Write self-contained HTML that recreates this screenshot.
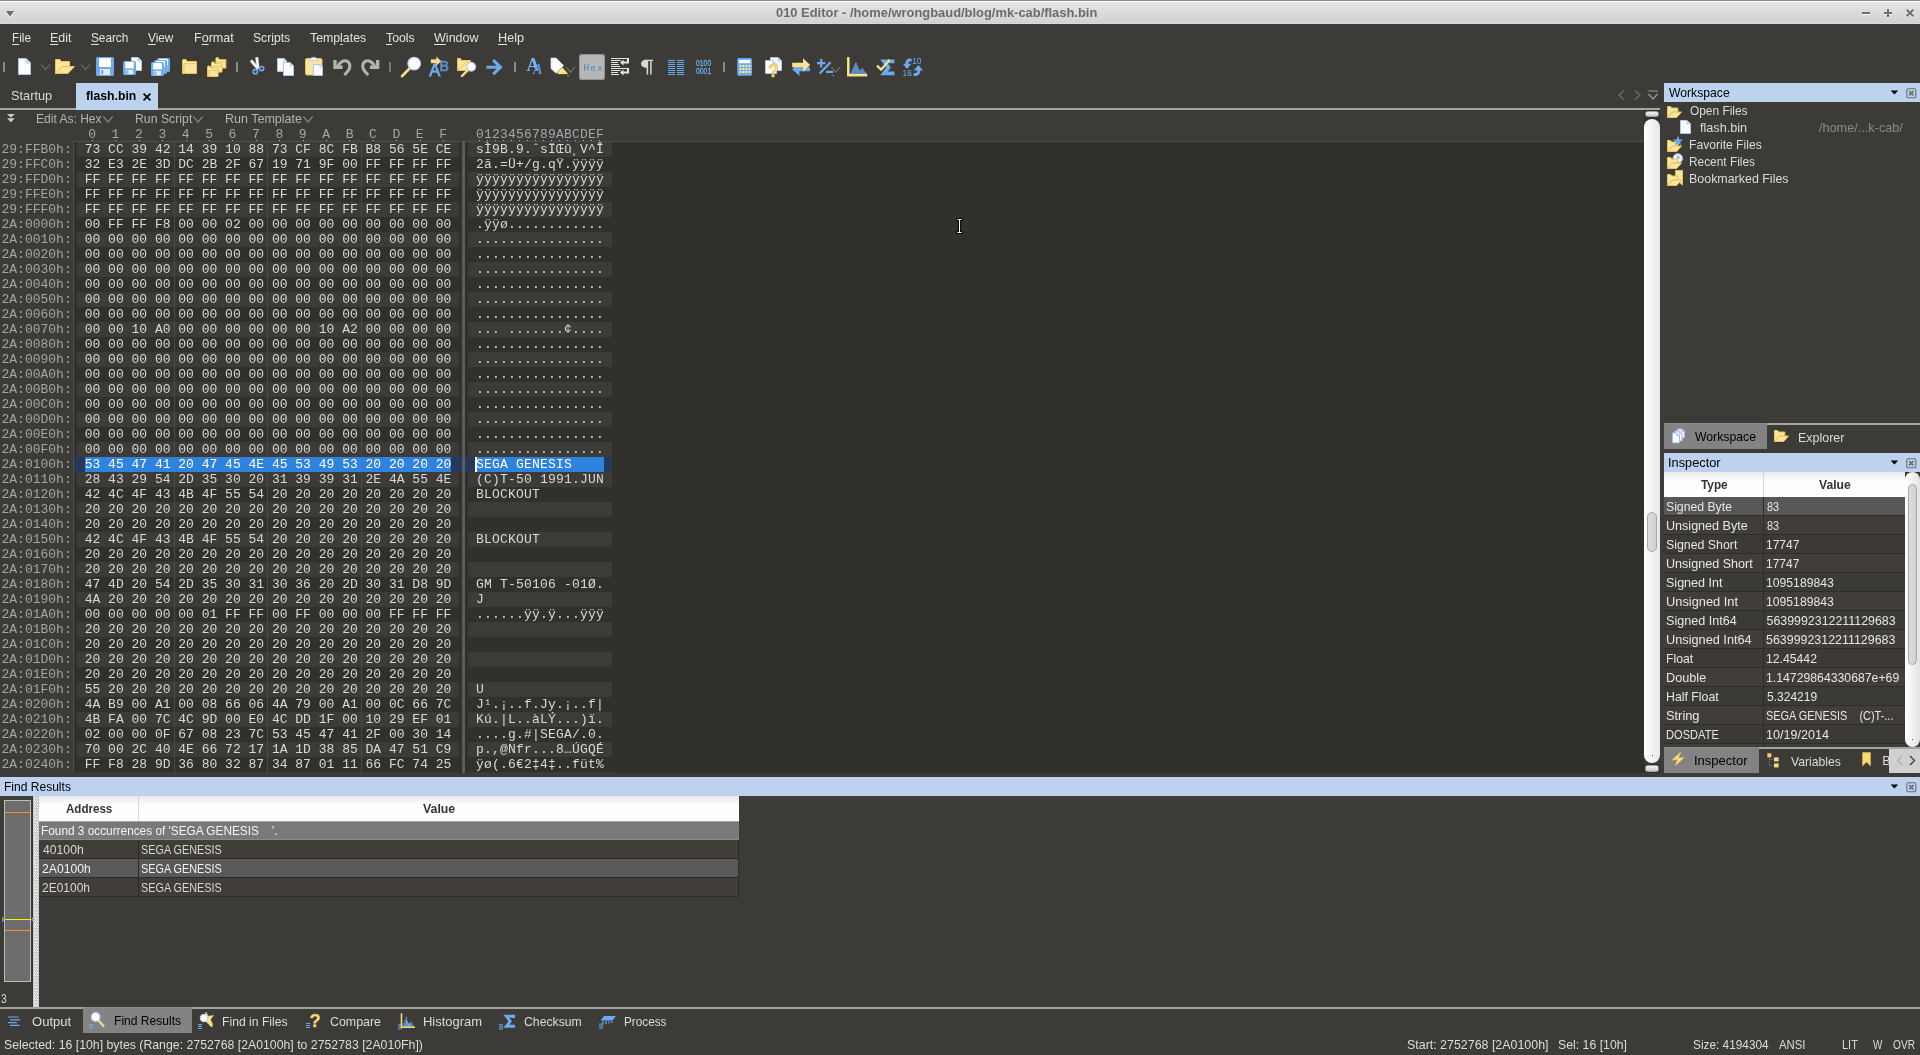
<!DOCTYPE html><html><head><meta charset="utf-8"><title>010 Editor - /home/wrongbaud/blog/mk-cab/flash.bin</title>
<style>
*{box-sizing:border-box}
html,body{margin:0;padding:0;background:#3c3b37;}
body{width:1920px;height:1055px;overflow:hidden;position:relative;font-family:"Liberation Sans",sans-serif;font-size:12.4px;color:#dcdcdc;}
#app{position:absolute;left:0;top:0;width:1920px;height:1055px;overflow:hidden;will-change:transform;}
.t{position:absolute;white-space:pre;transform-origin:0 0;}
.b{font-weight:bold}
.m{font-family:"Liberation Mono",monospace;font-size:13px;}
.k{color:#000}
.dim{color:#8a8a8a}
svg{position:absolute;overflow:visible}
u{text-decoration:underline;text-underline-offset:2px;text-decoration-thickness:1px}
</style></head><body><div id="app">
<div style="position:absolute;left:0;top:0;width:1920px;height:24px;background:linear-gradient(#8c8c8c 0,#8c8c8c 1px,#ffffff 1px,#ffffff 2px,#e5e5e5 2px,#d2d2d2 23px,#dadada 23px,#dadada 24px)"></div>
<svg style="left:5px;top:10px" width="10" height="9"><path d="M0.5 2L9.5 2L5 8Z" fill="#f6f6f6"/><path d="M0.9 1L9.1 1L5 6.8Z" fill="#707070"/></svg>
<span id="t1" class="t b" style="left:776.32px;top:5.4px;line-height:16px;transform:scaleX(1.0418);font-size:12.4px;color:#6b6b6b">010 Editor - /home/wrongbaud/blog/mk-cab/flash.bin</span>
<svg style="left:1860px;top:6px" width="58" height="14" viewBox="1860 6 58 14"><g fill="none" stroke-width="2"><g stroke="#f4f4f4" transform="translate(0,1)"><path d="M1862 13H1870"/><path d="M1884 13H1892M1888 9V17"/><path d="M1906.7 9.7L1913.3 16.3M1913.3 9.7L1906.7 16.3"/></g><g stroke="#707070"><path d="M1862 13H1870"/><path d="M1884 13H1892M1888 9V17"/><path d="M1906.7 9.7L1913.3 16.3M1913.3 9.7L1906.7 16.3"/></g></g></svg>
<span id="t2" class="t " style="left:12.10px;top:29.5px;line-height:16px;transform:scaleX(0.9464);color:#e2e2e2"><u>F</u>ile</span>
<span id="t3" class="t " style="left:49.96px;top:29.5px;line-height:16px;transform:scaleX(1.0023);color:#e2e2e2"><u>E</u>dit</span>
<span id="t4" class="t " style="left:91.08px;top:29.5px;line-height:16px;transform:scaleX(0.9492);color:#e2e2e2"><u>S</u>earch</span>
<span id="t5" class="t " style="left:147.92px;top:29.5px;line-height:16px;transform:scaleX(0.9527);color:#e2e2e2"><u>V</u>iew</span>
<span id="t6" class="t " style="left:193.72px;top:29.5px;line-height:16px;transform:scaleX(1.0136);color:#e2e2e2">F<u>o</u>rmat</span>
<span id="t7" class="t " style="left:253.24px;top:29.5px;line-height:16px;transform:scaleX(0.9811);color:#e2e2e2">Scr<u>i</u>pts</span>
<span id="t8" class="t " style="left:310.09px;top:29.5px;line-height:16px;transform:scaleX(0.9936);color:#e2e2e2">Temp<u>l</u>ates</span>
<span id="t9" class="t " style="left:386.32px;top:29.5px;line-height:16px;transform:scaleX(0.9898);color:#e2e2e2"><u>T</u>ools</span>
<span id="t10" class="t " style="left:434.05px;top:29.5px;line-height:16px;transform:scaleX(1.0123);color:#e2e2e2"><u>W</u>indow</span>
<span id="t11" class="t " style="left:498.18px;top:29.5px;line-height:16px;transform:scaleX(1.0219);color:#e2e2e2"><u>H</u>elp</span>
<svg style="left:0px;top:50px" width="960" height="34" viewBox="0 50 960 34"><rect x="3" y="62" width="2" height="10" fill="#8a8a8a"/>
<path d="M18.5 58.5H26L30.5 63V74.5H18.5Z" fill="#fbfcff" stroke="#b5c5ea"/><path d="M26 58.5V63H30.5" fill="#e3eafa" stroke="#b5c5ea" stroke-linejoin="round"/>
<path d="M41 64.5L45.5 69.5L50 64.5" stroke="#757575" stroke-width="1.1" fill="none"/>
<path d="M55.5 73.5V59.5H60.0L61.0 61.5H69.5V66.5H62.5Z" fill="#f8e59e" stroke="#e8c255" stroke-linejoin="round"/><path d="M55.5 73.5L62.5 66.5H74.5L68.0 73.5Z" fill="#f8e59e" stroke="#e8c255" stroke-linejoin="round"/>
<path d="M81 64.5L85.5 69.5L90 64.5" stroke="#757575" stroke-width="1.1" fill="none"/>
<rect x="96" y="57" width="18" height="19" rx="1.6" fill="#6cabee"/><rect x="99.0" y="58.2" width="12.0" height="8.8" fill="#ffffff"/><rect x="100.0" y="69.0" width="10.0" height="6.0" fill="#ebebeb"/><rect x="101.2" y="70.0" width="2.2" height="4.4" fill="#6cabee"/>
<path d="M131.5 57.5H138L141.5 61V70.5H131.5Z" fill="#fbfcff" stroke="#b5c5ea"/><path d="M138 57.5V61H141.5" fill="#e3eafa" stroke="#b5c5ea" stroke-linejoin="round"/><rect x="123" y="61" width="13" height="14" rx="1.6" fill="#6cabee"/><rect x="125.16666666666667" y="61.88421052631579" width="8.666666666666668" height="6.484210526315789" fill="#ffffff"/><rect x="125.88888888888889" y="69.84210526315789" width="7.222222222222222" height="4.421052631578947" fill="#ebebeb"/><rect x="126.75555555555556" y="70.57894736842105" width="1.588888888888889" height="3.2421052631578946" fill="#6cabee"/>
<rect x="157" y="58" width="13" height="14" rx="1.6" fill="#6cabee"/><rect x="159.16666666666666" y="58.88421052631579" width="8.666666666666668" height="6.484210526315789" fill="#ffffff"/><rect x="159.88888888888889" y="66.84210526315789" width="7.222222222222222" height="4.421052631578947" fill="#ebebeb"/><rect x="160.75555555555556" y="67.57894736842105" width="1.588888888888889" height="3.2421052631578946" fill="#6cabee"/><rect x="154" y="60" width="13" height="14" rx="1.6" fill="#6cabee"/><rect x="156.16666666666666" y="60.88421052631579" width="8.666666666666668" height="6.484210526315789" fill="#ffffff"/><rect x="156.88888888888889" y="68.84210526315789" width="7.222222222222222" height="4.421052631578947" fill="#ebebeb"/><rect x="157.75555555555556" y="69.57894736842105" width="1.588888888888889" height="3.2421052631578946" fill="#6cabee"/><rect x="151" y="62" width="13" height="14" rx="1.6" fill="#6cabee"/><rect x="153.16666666666666" y="62.88421052631579" width="8.666666666666668" height="6.484210526315789" fill="#ffffff"/><rect x="153.88888888888889" y="70.84210526315789" width="7.222222222222222" height="4.421052631578947" fill="#ebebeb"/><rect x="154.75555555555556" y="71.57894736842105" width="1.588888888888889" height="3.2421052631578946" fill="#6cabee"/>
<path d="M182.5 73.5V60L183 59.5H186.05L186.95 61.5H196.5V73.5Z" fill="#f8e59e" stroke="#e8c255"/><path d="M184 73V63.6H196" fill="none" stroke="#e8c255" stroke-width=".9"/><path d="M183.2 62.4H195.8" stroke="#fdf3c8" stroke-width=".8"/>
<path d="M215.9 68.10000000000001V58.2L216.4 57.7H218.37L219.03 59.7H225.9V68.10000000000001Z" fill="#f8e59e" stroke="#e8c255"/><path d="M217.4 67.60000000000001V61.800000000000004H225.4" fill="none" stroke="#e8c255" stroke-width=".9"/><path d="M216.6 60.6H225.20000000000002" stroke="#fdf3c8" stroke-width=".8"/><path d="M211.5 72.1V62.4L212 61.9H214.105L214.795 63.9H222.0V72.1Z" fill="#f8e59e" stroke="#e8c255"/><path d="M213 71.6V66.0H221.5" fill="none" stroke="#e8c255" stroke-width=".9"/><path d="M212.2 64.8H221.3" stroke="#fdf3c8" stroke-width=".8"/><path d="M207.5 76.5V66.6L208 66.1H210.132L210.828 68.1H218.1V76.5Z" fill="#f8e59e" stroke="#e8c255"/><path d="M209 76.0V70.19999999999999H217.6" fill="none" stroke="#e8c255" stroke-width=".9"/><path d="M208.2 69.0H217.4" stroke="#fdf3c8" stroke-width=".8"/>
<rect x="236" y="62" width="2" height="10" fill="#8a8a8a"/>
<path d="M250 61.2L252.4 59.8L259 68.2L257 69.6Z" fill="#f6f8fe" stroke="#dfe6f7" stroke-width=".5"/><path d="M255.6 57.6L258 57.2L259.2 68L256.8 68.8Z" fill="#f6f8fe" stroke="#dfe6f7" stroke-width=".5"/><path d="M257.6 68.6L256.2 70M258.4 68.4L260 68.4" stroke="#aab4c8" stroke-width="1.2"/><circle cx="255.3" cy="71.8" r="2.2" fill="#4a4a46" stroke="#6cabee" stroke-width="1.5"/><circle cx="261.6" cy="68.6" r="2.2" fill="#4a4a46" stroke="#6cabee" stroke-width="1.5"/>
<path d="M277.5 58.5H284L286.5 61V71.5H277.5Z" fill="#fbfcff" stroke="#b5c5ea"/><path d="M284 58.5V61H286.5" fill="#e3eafa" stroke="#b5c5ea" stroke-linejoin="round"/><path d="M283.5 62.5H290L293.5 66V75.5H283.5Z" fill="#fbfcff" stroke="#b5c5ea"/><path d="M290 62.5V66H293.5" fill="#e3eafa" stroke="#b5c5ea" stroke-linejoin="round"/>
<rect x="305.5" y="58.5" width="16.5" height="16.5" rx="1.5" fill="#f8e59e" stroke="#e8c255"/><path d="M309.5 60.5V58.6H311.2L311.8 57.4H315.8L316.4 58.6H318V60.5Z" fill="#f4f6fc" stroke="#b5c5ea" stroke-width=".8"/><path d="M313.5 64.5H320L322.5 67V75.5H313.5Z" fill="#fbfcff" stroke="#b5c5ea"/><path d="M320 64.5V67H322.5" fill="#e3eafa" stroke="#b5c5ea" stroke-linejoin="round"/>
<g transform="translate(0,0)"><path d="M333.3 60H336.6V65.6H342.6V69H333.3Z" fill="#b2b2b2"/><path d="M338 66.4C339.6 61.8 344 59.8 347 61.2C350.4 62.8 350.8 67.6 348 71L344.4 75" fill="none" stroke="#b2b2b2" stroke-width="3.1" stroke-linejoin="round"/></g>
<g transform="translate(379.6,0) scale(-1,1) translate(-333,0)"><path d="M333.3 60H336.6V65.6H342.6V69H333.3Z" fill="#b2b2b2"/><path d="M338 66.4C339.6 61.8 344 59.8 347 61.2C350.4 62.8 350.8 67.6 348 71L344.4 75" fill="none" stroke="#b2b2b2" stroke-width="3.1" stroke-linejoin="round"/></g>
<rect x="389" y="62" width="2" height="10" fill="#777"/>
<path d="M409.8 68.1L402 76.2" stroke="#f8e08e" stroke-width="2.6" stroke-linecap="round"/><path d="M409.8 68.1L402 76.2" stroke="#e9c45c" stroke-width=".5" transform="translate(.9,.9)"/><circle cx="414.2" cy="63.6" r="6.3" fill="#fdfdff" stroke="#c3d0ee" stroke-width="1.2"/>
<text x="429.2" y="76" font-family="Liberation Sans" font-size="16.6" fill="#6cabee" stroke="#6cabee" stroke-width=".8">A</text><text x="439.6" y="70.6" font-family="Liberation Sans" font-size="15.5" fill="#5a8fd0" stroke="#5a8fd0" stroke-width=".7" textLength="9.4" lengthAdjust="spacingAndGlyphs">B</text><path d="M431 59.4H436.4V56.8L441 61.2L436.4 65.6V63H431Z" fill="#f8e08e" stroke="#ecc862" stroke-width=".4"/>
<path d="M457.5 70.5V58.5H460.5L461.5 60.5H470.5V70.5Z" fill="#f8e59e" stroke="#e8c255"/><path d="M458 70L466 62.5H470" fill="none" stroke="#e8c255" stroke-width=".8"/><path d="M468.1 69.8L461.8 76" stroke="#f8e08e" stroke-width="2.2" stroke-linecap="round"/><path d="M468.1 69.8L461.8 76" stroke="#e9c45c" stroke-width=".5" transform="translate(.9,.9)"/><circle cx="471.2" cy="66.8" r="4.3" fill="#fdfdff" stroke="#c3d0ee" stroke-width="1.2"/>
<path d="M486.4 67.2H499.5M493.2 60.2L500.4 67.2L493.2 74.2" fill="none" stroke="#6cabee" stroke-width="3.1"/>
<rect x="514" y="62" width="2" height="10" fill="#8a8a8a"/>
<text x="526.4" y="71.4" font-family="Liberation Serif" font-weight="bold" font-size="18" fill="#78b8f6">A</text><text x="533" y="74" style="font-style:italic;font-weight:bold" font-family="Liberation Serif" font-size="14.6" fill="#5590d0">A</text>
<path d="M551 58H556.2L563.6 65.6L556 73.2L551 68.6Z" fill="#fbfcff" stroke="#e4e9f6" stroke-width=".6"/><path d="M562.4 67.6L568 73.9H558L557.4 72.6Z" fill="#f9e592" stroke="#e8c255" stroke-width=".4"/><path d="M566 67L570.5 72.4L575 67" stroke="#777" stroke-width="1.1" fill="none"/><path d="M566.5 75.2H570L568.2 77Z" fill="#777"/>
<rect x="611" y="58" width="15.5" height="1" fill="#e4e4e4"/><rect x="611" y="60" width="9.5" height="1" fill="#e4e4e4"/><rect x="611" y="62" width="7" height="1" fill="#e4e4e4"/><rect x="611" y="64" width="8" height="1" fill="#e4e4e4"/><rect x="611" y="66" width="9" height="1" fill="#e4e4e4"/><rect x="611" y="68" width="15.5" height="1" fill="#e4e4e4"/><rect x="611" y="70" width="9.5" height="1" fill="#e4e4e4"/><rect x="611" y="72" width="7" height="1" fill="#e4e4e4"/><rect x="611" y="74" width="8" height="1" fill="#e4e4e4"/><path d="M626 58H629V63.5H623.5V65.6L620 62.6L623.5 59.6V61.5H627V59H626Z" fill="#e4e4e4"/><path d="M626 68H629V73.5H623.5V75.6L620 72.6L623.5 69.6V71.5H627V69H626Z" fill="#e4e4e4"/>
<path d="M645 60.4H653.2" stroke="#d8d8d8" stroke-width="1.3"/><path d="M647.4 60V74.4M650.9 60V74.4" stroke="#d8d8d8" stroke-width="1.5" fill="none"/><path d="M647 59.8H645.6A4.6 3.95 0 0 0 645.6 67.7H647Z" fill="#d8d8d8"/>
<path d="M668 60.40H675.2M677 60.40H684.2" stroke="#6cabee" stroke-width="1"/><path d="M668 62.42H675.2M677 62.42H684.2" stroke="#6cabee" stroke-width="1"/><path d="M668 64.44H675.2M677 64.44H684.2" stroke="#6cabee" stroke-width="1"/><path d="M668 66.46H675.2M677 66.46H684.2" stroke="#6cabee" stroke-width="1"/><path d="M668 68.48H675.2M677 68.48H684.2" stroke="#6cabee" stroke-width="1"/><path d="M668 70.50H675.2M677 70.50H684.2" stroke="#6cabee" stroke-width="1"/><path d="M668 72.52H675.2M677 72.52H684.2" stroke="#6cabee" stroke-width="1"/><path d="M668 74.54H675.2M677 74.54H684.2" stroke="#6cabee" stroke-width="1"/>
<text x="696" y="66" font-family="Liberation Sans" font-size="8.6" fill="#6cabee" stroke="#6cabee" stroke-width=".3" textLength="15.2" lengthAdjust="spacingAndGlyphs">0100</text><text x="696" y="74.2" font-family="Liberation Sans" font-size="8.6" fill="#6cabee" stroke="#6cabee" stroke-width=".3" textLength="15.2" lengthAdjust="spacingAndGlyphs">0001</text>
<rect x="723" y="62" width="2" height="10" fill="#8a8a8a"/>
<rect x="737.2" y="58" width="14.8" height="17.8" rx="1.8" fill="#6cabee"/><rect x="739" y="60" width="11.2" height="3.2" fill="#fff"/><rect x="739.4" y="65" width="2" height="2" fill="#f9e88f"/><rect x="742.4" y="65" width="2" height="2" fill="#f9e88f"/><rect x="745.4" y="65" width="2" height="2" fill="#f9e88f"/><rect x="748.4" y="65" width="2" height="2" fill="#f9e88f"/><rect x="739.4" y="68" width="2" height="2" fill="#f9e88f"/><rect x="742.4" y="68" width="2" height="2" fill="#f9e88f"/><rect x="745.4" y="68" width="2" height="2" fill="#f9e88f"/><rect x="748.4" y="68" width="2" height="2" fill="#f9e88f"/><rect x="739.4" y="71" width="2" height="2" fill="#f9e88f"/><rect x="742.4" y="71" width="2" height="2" fill="#f9e88f"/><rect x="745.4" y="71" width="2" height="2" fill="#f9e88f"/><rect x="748.4" y="71" width="2" height="2" fill="#f9e88f"/>
<path d="M770.5 57.5H778L781.5 61V70.5H770.5Z" fill="#fbfcff" stroke="#b5c5ea"/><path d="M778 57.5V61H781.5" fill="#e3eafa" stroke="#b5c5ea" stroke-linejoin="round"/><path d="M765.5 60.5H773L776.5 64V73.5H765.5Z" fill="#fbfcff" stroke="#b5c5ea"/><path d="M773 60.5V64H776.5" fill="#e3eafa" stroke="#b5c5ea" stroke-linejoin="round"/><text x="768" y="76.8" font-family="Liberation Sans" font-weight="bold" font-size="18" fill="#f8df88" stroke="#dcb047" stroke-width=".5">?</text>
<path d="M810 67.2H799.4V62.4L792.2 69.2L799.4 76V71.2H810Z" fill="#6cabee"/><path d="M792.2 62.8H803V58.2L810.2 65L803 71.8V67.2H792.2Z" fill="#f9e296"/>
<path d="M817 63.2H825.4M821.2 59V67.4M819.6 73.4L830.6 62.2M826 71.8H833" stroke="#6cabee" stroke-width="2.2" fill="none"/><path d="M831.4 67.2L835.6999999999999 72.0L840.0 67.2" stroke="#777" stroke-width="1.1" fill="none"/><path d="M831.6 75H834.8L833.2 76.6Z" fill="#777"/>
<path d="M850.5 74V73" stroke="#6cabee" stroke-width=".72"/><path d="M851.5 74V71.6" stroke="#6cabee" stroke-width=".72"/><path d="M852.5 74V69.4" stroke="#6cabee" stroke-width=".72"/><path d="M853.5 74V67" stroke="#6cabee" stroke-width=".72"/><path d="M854.5 74V64.6" stroke="#6cabee" stroke-width=".72"/><path d="M855.5 74V62.6" stroke="#6cabee" stroke-width=".72"/><path d="M856.5 74V63" stroke="#6cabee" stroke-width=".72"/><path d="M857.5 74V65.4" stroke="#6cabee" stroke-width=".72"/><path d="M858.5 74V67.6" stroke="#6cabee" stroke-width=".72"/><path d="M859.5 74V69.6" stroke="#6cabee" stroke-width=".72"/><path d="M860.5 74V70" stroke="#6cabee" stroke-width=".72"/><path d="M861.5 74V68.6" stroke="#6cabee" stroke-width=".72"/><path d="M862.5 74V68" stroke="#6cabee" stroke-width=".72"/><path d="M863.5 74V69.4" stroke="#6cabee" stroke-width=".72"/><path d="M864.5 74V70.8" stroke="#6cabee" stroke-width=".72"/><path d="M865.5 74V72" stroke="#6cabee" stroke-width=".72"/><path d="M866.5 74V73" stroke="#6cabee" stroke-width=".72"/><path d="M848.2 57V75.2H867.2" fill="none" stroke="#f7d877" stroke-width="2.4"/><path d="M848.8 57.5V74.6H867" fill="none" stroke="#fdf0b8" stroke-width=".7"/>
<path d="M892.6 63.2V61.4H884L888.6 67.4L884 73.4H892.6V71.4" fill="none" stroke="#6cabee" stroke-width="3.7"/><path d="M877 65.6L881.2 69.6L889.8 59.8" fill="none" stroke="#f8de86" stroke-width="2.3"/>
<path d="M911.6 60H909A3.3 3.3 0 0 0 907 64.4" fill="none" stroke="#6cabee" stroke-width="3"/><path d="M902.8 63.8H911.4L907 69Z" fill="#6cabee"/><path d="M913.6 74.6H916A3.3 3.3 0 0 0 918.4 70" fill="none" stroke="#6cabee" stroke-width="3"/><path d="M913.6 70.4H923L918.4 65Z" fill="#6cabee"/><text x="912.2" y="64.2" font-family="Liberation Sans" font-size="8.4" fill="#6cabee">10</text><text x="902.6" y="76.4" font-family="Liberation Sans" font-size="8.4" fill="#6cabee">16</text></svg>
<div style="position:absolute;left:579px;top:54px;width:26px;height:26px;border-radius:3.5px;background:#b7b7b7;box-shadow:inset 0 0 0 1px #939393, inset 0 0 2px 1px #a8a8a8"></div>
<span class="t" style="left:583.6px;top:61px;line-height:14px;font-family:'DejaVu Sans Mono',monospace;font-size:9.3px;letter-spacing:1.05px;color:#4a86c8">Hex</span>
<span id="t12" class="t " style="left:10.60px;top:87.6px;line-height:16px;transform:scaleX(1.0292);color:#d8d8d8">Startup</span>
<div style="position:absolute;left:76px;top:83px;width:82px;height:27px;background:#bcd2ee;"></div>
<span id="t13" class="t b k" style="left:85.59px;top:87.6px;line-height:16px;transform:scaleX(0.9884);">flash.bin</span>
<svg style="left:142px;top:92px" width="10" height="10"><path d="M1.6 1.6L8.4 8.4M8.4 1.6L1.6 8.4" stroke="#000" stroke-width="1.7" fill="none"/></svg>
<div style="position:absolute;left:0px;top:108px;width:76px;height:2px;background:#a5a5a5;"></div>
<div style="position:absolute;left:158px;top:108px;width:1502px;height:2px;background:#a5a5a5;"></div>
<svg style="left:1616px;top:88.2px" width="44" height="14"><g stroke="#6f6f6f" stroke-width="1.2" fill="none"><path d="M8 2.5L3 7L8 11.5"/><path d="M19 2.5L24 7L19 11.5"/><path d="M32 3H42M32.5 6L37 11L41.5 6" stroke="#9a9a9a"/></g></svg>
<svg style="left:6.6px;top:114.2px" width="9" height="11"><g fill="#cdcdcd"><path d="M0 0H7.8L3.9 3.8Z"/><path d="M0 4.2H7.8L3.9 8.2Z"/></g></svg>
<span id="t14" class="t " style="left:35.98px;top:110.8px;line-height:16px;transform:scaleX(0.9714);color:#b4b4b4">Edit As: Hex</span>
<svg style="left:102.9px;top:115.6px" width="10" height="8"><path d="M0.4 0.6L5 6.2L9.6 0.6" stroke="#8e8e8e" stroke-width="1.1" fill="none"/></svg>
<span id="t15" class="t " style="left:134.52px;top:110.8px;line-height:16px;transform:scaleX(0.9907);color:#b4b4b4">Run Script</span>
<svg style="left:193.0px;top:115.6px" width="10" height="8"><path d="M0.4 0.6L5 6.2L9.6 0.6" stroke="#8e8e8e" stroke-width="1.1" fill="none"/></svg>
<span id="t16" class="t " style="left:224.75px;top:110.8px;line-height:16px;transform:scaleX(1.0099);color:#b4b4b4">Run Template</span>
<svg style="left:302.9px;top:115.6px" width="10" height="8"><path d="M0.4 0.6L5 6.2L9.6 0.6" stroke="#8e8e8e" stroke-width="1.1" fill="none"/></svg>
<div style="position:absolute;left:74px;top:142px;width:1570px;height:631px;background:#32302d;"></div>
<div class="t m" style="left:88.2px;top:127px;line-height:15px;color:#a6a6a6;word-spacing:0">0  1  2  3  4  5  6  7  8  9  A  B  C  D  E  F</div>
<div class="t m" style="left:476px;top:127px;line-height:15px;color:#a6a6a6;letter-spacing:0.2px">0123456789ABCDEF</div>
<i style="position:absolute;left:92px;top:140px;width:1px;height:1px;background:#b0b0b0"></i><i style="position:absolute;left:115px;top:140px;width:1px;height:1px;background:#b0b0b0"></i><i style="position:absolute;left:139px;top:140px;width:1px;height:1px;background:#b0b0b0"></i><i style="position:absolute;left:162px;top:140px;width:1px;height:1px;background:#b0b0b0"></i><i style="position:absolute;left:186px;top:140px;width:1px;height:1px;background:#b0b0b0"></i><i style="position:absolute;left:209px;top:140px;width:1px;height:1px;background:#b0b0b0"></i><i style="position:absolute;left:232px;top:140px;width:1px;height:1px;background:#b0b0b0"></i><i style="position:absolute;left:256px;top:140px;width:1px;height:1px;background:#b0b0b0"></i><i style="position:absolute;left:279px;top:140px;width:1px;height:1px;background:#b0b0b0"></i><i style="position:absolute;left:303px;top:140px;width:1px;height:1px;background:#b0b0b0"></i><i style="position:absolute;left:326px;top:140px;width:1px;height:1px;background:#b0b0b0"></i><i style="position:absolute;left:349px;top:140px;width:1px;height:1px;background:#b0b0b0"></i><i style="position:absolute;left:373px;top:140px;width:1px;height:1px;background:#b0b0b0"></i><i style="position:absolute;left:396px;top:140px;width:1px;height:1px;background:#b0b0b0"></i><i style="position:absolute;left:420px;top:140px;width:1px;height:1px;background:#b0b0b0"></i><i style="position:absolute;left:443px;top:140px;width:1px;height:1px;background:#b0b0b0"></i><i style="position:absolute;left:479px;top:140px;width:1px;height:1px;background:#b0b0b0"></i><i style="position:absolute;left:487px;top:140px;width:1px;height:1px;background:#b0b0b0"></i><i style="position:absolute;left:495px;top:140px;width:1px;height:1px;background:#b0b0b0"></i><i style="position:absolute;left:503px;top:140px;width:1px;height:1px;background:#b0b0b0"></i><i style="position:absolute;left:511px;top:140px;width:1px;height:1px;background:#b0b0b0"></i><i style="position:absolute;left:519px;top:140px;width:1px;height:1px;background:#b0b0b0"></i><i style="position:absolute;left:527px;top:140px;width:1px;height:1px;background:#b0b0b0"></i><i style="position:absolute;left:535px;top:140px;width:1px;height:1px;background:#b0b0b0"></i><i style="position:absolute;left:543px;top:140px;width:1px;height:1px;background:#b0b0b0"></i><i style="position:absolute;left:551px;top:140px;width:1px;height:1px;background:#b0b0b0"></i><i style="position:absolute;left:559px;top:140px;width:1px;height:1px;background:#b0b0b0"></i><i style="position:absolute;left:567px;top:140px;width:1px;height:1px;background:#b0b0b0"></i><i style="position:absolute;left:575px;top:140px;width:1px;height:1px;background:#b0b0b0"></i><i style="position:absolute;left:583px;top:140px;width:1px;height:1px;background:#b0b0b0"></i><i style="position:absolute;left:591px;top:140px;width:1px;height:1px;background:#b0b0b0"></i><i style="position:absolute;left:599px;top:140px;width:1px;height:1px;background:#b0b0b0"></i>
<div style="position:absolute;left:73px;top:141px;width:1571px;height:1px;background:#4b4d4f;"></div>
<div style="position:absolute;left:73px;top:141px;width:1px;height:632px;background:#4b4d4f;"></div>
<div style="position:absolute;left:77px;top:142px;width:382px;height:15px;background:#3c3b37;"></div>
<div style="position:absolute;left:468px;top:142px;width:144px;height:15px;background:#3c3b37;"></div>
<div style="position:absolute;left:77px;top:172px;width:382px;height:15px;background:#3c3b37;"></div>
<div style="position:absolute;left:468px;top:172px;width:144px;height:15px;background:#3c3b37;"></div>
<div style="position:absolute;left:77px;top:202px;width:382px;height:15px;background:#3c3b37;"></div>
<div style="position:absolute;left:468px;top:202px;width:144px;height:15px;background:#3c3b37;"></div>
<div style="position:absolute;left:77px;top:232px;width:382px;height:15px;background:#3c3b37;"></div>
<div style="position:absolute;left:468px;top:232px;width:144px;height:15px;background:#3c3b37;"></div>
<div style="position:absolute;left:77px;top:262px;width:382px;height:15px;background:#3c3b37;"></div>
<div style="position:absolute;left:468px;top:262px;width:144px;height:15px;background:#3c3b37;"></div>
<div style="position:absolute;left:77px;top:292px;width:382px;height:15px;background:#3c3b37;"></div>
<div style="position:absolute;left:468px;top:292px;width:144px;height:15px;background:#3c3b37;"></div>
<div style="position:absolute;left:77px;top:322px;width:382px;height:15px;background:#3c3b37;"></div>
<div style="position:absolute;left:468px;top:322px;width:144px;height:15px;background:#3c3b37;"></div>
<div style="position:absolute;left:77px;top:352px;width:382px;height:15px;background:#3c3b37;"></div>
<div style="position:absolute;left:468px;top:352px;width:144px;height:15px;background:#3c3b37;"></div>
<div style="position:absolute;left:77px;top:382px;width:382px;height:15px;background:#3c3b37;"></div>
<div style="position:absolute;left:468px;top:382px;width:144px;height:15px;background:#3c3b37;"></div>
<div style="position:absolute;left:77px;top:412px;width:382px;height:15px;background:#3c3b37;"></div>
<div style="position:absolute;left:468px;top:412px;width:144px;height:15px;background:#3c3b37;"></div>
<div style="position:absolute;left:77px;top:442px;width:382px;height:15px;background:#3c3b37;"></div>
<div style="position:absolute;left:468px;top:442px;width:144px;height:15px;background:#3c3b37;"></div>
<div style="position:absolute;left:74px;top:457px;width:538px;height:15px;background:#27395b;"></div>
<div style="position:absolute;left:85px;top:457px;width:366px;height:15px;background:#2d83de;"></div>
<div style="position:absolute;left:477px;top:457px;width:127px;height:15px;background:#2d83de;"></div>
<div style="position:absolute;left:77px;top:472px;width:382px;height:15px;background:#3c3b37;"></div>
<div style="position:absolute;left:468px;top:472px;width:144px;height:15px;background:#3c3b37;"></div>
<div style="position:absolute;left:77px;top:502px;width:382px;height:15px;background:#3c3b37;"></div>
<div style="position:absolute;left:468px;top:502px;width:144px;height:15px;background:#3c3b37;"></div>
<div style="position:absolute;left:77px;top:532px;width:382px;height:15px;background:#3c3b37;"></div>
<div style="position:absolute;left:468px;top:532px;width:144px;height:15px;background:#3c3b37;"></div>
<div style="position:absolute;left:77px;top:562px;width:382px;height:15px;background:#3c3b37;"></div>
<div style="position:absolute;left:468px;top:562px;width:144px;height:15px;background:#3c3b37;"></div>
<div style="position:absolute;left:77px;top:592px;width:382px;height:15px;background:#3c3b37;"></div>
<div style="position:absolute;left:468px;top:592px;width:144px;height:15px;background:#3c3b37;"></div>
<div style="position:absolute;left:77px;top:622px;width:382px;height:15px;background:#3c3b37;"></div>
<div style="position:absolute;left:468px;top:622px;width:144px;height:15px;background:#3c3b37;"></div>
<div style="position:absolute;left:77px;top:652px;width:382px;height:15px;background:#3c3b37;"></div>
<div style="position:absolute;left:468px;top:652px;width:144px;height:15px;background:#3c3b37;"></div>
<div style="position:absolute;left:77px;top:682px;width:382px;height:15px;background:#3c3b37;"></div>
<div style="position:absolute;left:468px;top:682px;width:144px;height:15px;background:#3c3b37;"></div>
<div style="position:absolute;left:77px;top:712px;width:382px;height:15px;background:#3c3b37;"></div>
<div style="position:absolute;left:468px;top:712px;width:144px;height:15px;background:#3c3b37;"></div>
<div style="position:absolute;left:77px;top:742px;width:382px;height:15px;background:#3c3b37;"></div>
<div style="position:absolute;left:468px;top:742px;width:144px;height:15px;background:#3c3b37;"></div>
<div style="position:absolute;left:77px;top:772px;width:382px;height:1px;background:#3c3b37;"></div>
<div style="position:absolute;left:468px;top:772px;width:144px;height:1px;background:#3c3b37;"></div>
<div style="position:absolute;left:174px;top:142px;width:1px;height:631px;background:#4a4a48;"></div>
<div style="position:absolute;left:267px;top:142px;width:1px;height:631px;background:#4a4a48;"></div>
<div style="position:absolute;left:361px;top:142px;width:1px;height:631px;background:#4a4a48;"></div>
<div style="position:absolute;left:85px;top:457px;width:366px;height:15px;background:#2d83de;"></div>
<div style="position:absolute;left:462px;top:142px;width:3px;height:631px;background:#5c5c5c;"></div>
<div style="position:absolute;left:475px;top:457px;width:2px;height:15px;background:#ffffff;"></div>
<div class="t m" style="left:1.5px;top:142px;line-height:15px;color:#a4a4a4">29:FFB0h:</div>
<div class="t m" style="left:84.7px;top:142px;line-height:15px;color:#d8d8d8">73 CC 39 42 14 39 10 88 73 CF 8C FB B8 56 5E CE</div>
<div class="t m" style="left:476px;top:142px;line-height:15px;color:#d8d8d8;letter-spacing:0.2px">sÌ9B.9.ˆsÏŒû¸V^Î</div>
<div class="t m" style="left:1.5px;top:157px;line-height:15px;color:#a4a4a4">29:FFC0h:</div>
<div class="t m" style="left:84.7px;top:157px;line-height:15px;color:#d8d8d8">32 E3 2E 3D DC 2B 2F 67 19 71 9F 00 FF FF FF FF</div>
<div class="t m" style="left:476px;top:157px;line-height:15px;color:#d8d8d8;letter-spacing:0.2px">2ã.=Ü+/g.qŸ.ÿÿÿÿ</div>
<div class="t m" style="left:1.5px;top:172px;line-height:15px;color:#a4a4a4">29:FFD0h:</div>
<div class="t m" style="left:84.7px;top:172px;line-height:15px;color:#d8d8d8">FF FF FF FF FF FF FF FF FF FF FF FF FF FF FF FF</div>
<div class="t m" style="left:476px;top:172px;line-height:15px;color:#d8d8d8;letter-spacing:0.2px">ÿÿÿÿÿÿÿÿÿÿÿÿÿÿÿÿ</div>
<div class="t m" style="left:1.5px;top:187px;line-height:15px;color:#a4a4a4">29:FFE0h:</div>
<div class="t m" style="left:84.7px;top:187px;line-height:15px;color:#d8d8d8">FF FF FF FF FF FF FF FF FF FF FF FF FF FF FF FF</div>
<div class="t m" style="left:476px;top:187px;line-height:15px;color:#d8d8d8;letter-spacing:0.2px">ÿÿÿÿÿÿÿÿÿÿÿÿÿÿÿÿ</div>
<div class="t m" style="left:1.5px;top:202px;line-height:15px;color:#a4a4a4">29:FFF0h:</div>
<div class="t m" style="left:84.7px;top:202px;line-height:15px;color:#d8d8d8">FF FF FF FF FF FF FF FF FF FF FF FF FF FF FF FF</div>
<div class="t m" style="left:476px;top:202px;line-height:15px;color:#d8d8d8;letter-spacing:0.2px">ÿÿÿÿÿÿÿÿÿÿÿÿÿÿÿÿ</div>
<div class="t m" style="left:1.5px;top:217px;line-height:15px;color:#a4a4a4">2A:0000h:</div>
<div class="t m" style="left:84.7px;top:217px;line-height:15px;color:#d8d8d8">00 FF FF F8 00 00 02 00 00 00 00 00 00 00 00 00</div>
<div class="t m" style="left:476px;top:217px;line-height:15px;color:#d8d8d8;letter-spacing:0.2px">.ÿÿø............</div>
<div class="t m" style="left:1.5px;top:232px;line-height:15px;color:#a4a4a4">2A:0010h:</div>
<div class="t m" style="left:84.7px;top:232px;line-height:15px;color:#d8d8d8">00 00 00 00 00 00 00 00 00 00 00 00 00 00 00 00</div>
<div class="t m" style="left:476px;top:232px;line-height:15px;color:#d8d8d8;letter-spacing:0.2px">................</div>
<div class="t m" style="left:1.5px;top:247px;line-height:15px;color:#a4a4a4">2A:0020h:</div>
<div class="t m" style="left:84.7px;top:247px;line-height:15px;color:#d8d8d8">00 00 00 00 00 00 00 00 00 00 00 00 00 00 00 00</div>
<div class="t m" style="left:476px;top:247px;line-height:15px;color:#d8d8d8;letter-spacing:0.2px">................</div>
<div class="t m" style="left:1.5px;top:262px;line-height:15px;color:#a4a4a4">2A:0030h:</div>
<div class="t m" style="left:84.7px;top:262px;line-height:15px;color:#d8d8d8">00 00 00 00 00 00 00 00 00 00 00 00 00 00 00 00</div>
<div class="t m" style="left:476px;top:262px;line-height:15px;color:#d8d8d8;letter-spacing:0.2px">................</div>
<div class="t m" style="left:1.5px;top:277px;line-height:15px;color:#a4a4a4">2A:0040h:</div>
<div class="t m" style="left:84.7px;top:277px;line-height:15px;color:#d8d8d8">00 00 00 00 00 00 00 00 00 00 00 00 00 00 00 00</div>
<div class="t m" style="left:476px;top:277px;line-height:15px;color:#d8d8d8;letter-spacing:0.2px">................</div>
<div class="t m" style="left:1.5px;top:292px;line-height:15px;color:#a4a4a4">2A:0050h:</div>
<div class="t m" style="left:84.7px;top:292px;line-height:15px;color:#d8d8d8">00 00 00 00 00 00 00 00 00 00 00 00 00 00 00 00</div>
<div class="t m" style="left:476px;top:292px;line-height:15px;color:#d8d8d8;letter-spacing:0.2px">................</div>
<div class="t m" style="left:1.5px;top:307px;line-height:15px;color:#a4a4a4">2A:0060h:</div>
<div class="t m" style="left:84.7px;top:307px;line-height:15px;color:#d8d8d8">00 00 00 00 00 00 00 00 00 00 00 00 00 00 00 00</div>
<div class="t m" style="left:476px;top:307px;line-height:15px;color:#d8d8d8;letter-spacing:0.2px">................</div>
<div class="t m" style="left:1.5px;top:322px;line-height:15px;color:#a4a4a4">2A:0070h:</div>
<div class="t m" style="left:84.7px;top:322px;line-height:15px;color:#d8d8d8">00 00 10 A0 00 00 00 00 00 00 10 A2 00 00 00 00</div>
<div class="t m" style="left:476px;top:322px;line-height:15px;color:#d8d8d8;letter-spacing:0.2px">... .......¢....</div>
<div class="t m" style="left:1.5px;top:337px;line-height:15px;color:#a4a4a4">2A:0080h:</div>
<div class="t m" style="left:84.7px;top:337px;line-height:15px;color:#d8d8d8">00 00 00 00 00 00 00 00 00 00 00 00 00 00 00 00</div>
<div class="t m" style="left:476px;top:337px;line-height:15px;color:#d8d8d8;letter-spacing:0.2px">................</div>
<div class="t m" style="left:1.5px;top:352px;line-height:15px;color:#a4a4a4">2A:0090h:</div>
<div class="t m" style="left:84.7px;top:352px;line-height:15px;color:#d8d8d8">00 00 00 00 00 00 00 00 00 00 00 00 00 00 00 00</div>
<div class="t m" style="left:476px;top:352px;line-height:15px;color:#d8d8d8;letter-spacing:0.2px">................</div>
<div class="t m" style="left:1.5px;top:367px;line-height:15px;color:#a4a4a4">2A:00A0h:</div>
<div class="t m" style="left:84.7px;top:367px;line-height:15px;color:#d8d8d8">00 00 00 00 00 00 00 00 00 00 00 00 00 00 00 00</div>
<div class="t m" style="left:476px;top:367px;line-height:15px;color:#d8d8d8;letter-spacing:0.2px">................</div>
<div class="t m" style="left:1.5px;top:382px;line-height:15px;color:#a4a4a4">2A:00B0h:</div>
<div class="t m" style="left:84.7px;top:382px;line-height:15px;color:#d8d8d8">00 00 00 00 00 00 00 00 00 00 00 00 00 00 00 00</div>
<div class="t m" style="left:476px;top:382px;line-height:15px;color:#d8d8d8;letter-spacing:0.2px">................</div>
<div class="t m" style="left:1.5px;top:397px;line-height:15px;color:#a4a4a4">2A:00C0h:</div>
<div class="t m" style="left:84.7px;top:397px;line-height:15px;color:#d8d8d8">00 00 00 00 00 00 00 00 00 00 00 00 00 00 00 00</div>
<div class="t m" style="left:476px;top:397px;line-height:15px;color:#d8d8d8;letter-spacing:0.2px">................</div>
<div class="t m" style="left:1.5px;top:412px;line-height:15px;color:#a4a4a4">2A:00D0h:</div>
<div class="t m" style="left:84.7px;top:412px;line-height:15px;color:#d8d8d8">00 00 00 00 00 00 00 00 00 00 00 00 00 00 00 00</div>
<div class="t m" style="left:476px;top:412px;line-height:15px;color:#d8d8d8;letter-spacing:0.2px">................</div>
<div class="t m" style="left:1.5px;top:427px;line-height:15px;color:#a4a4a4">2A:00E0h:</div>
<div class="t m" style="left:84.7px;top:427px;line-height:15px;color:#d8d8d8">00 00 00 00 00 00 00 00 00 00 00 00 00 00 00 00</div>
<div class="t m" style="left:476px;top:427px;line-height:15px;color:#d8d8d8;letter-spacing:0.2px">................</div>
<div class="t m" style="left:1.5px;top:442px;line-height:15px;color:#a4a4a4">2A:00F0h:</div>
<div class="t m" style="left:84.7px;top:442px;line-height:15px;color:#d8d8d8">00 00 00 00 00 00 00 00 00 00 00 00 00 00 00 00</div>
<div class="t m" style="left:476px;top:442px;line-height:15px;color:#d8d8d8;letter-spacing:0.2px">................</div>
<div class="t m" style="left:1.5px;top:457px;line-height:15px;color:#a4a4a4">2A:0100h:</div>
<div class="t m" style="left:84.7px;top:457px;line-height:15px;color:#ffffff">53 45 47 41 20 47 45 4E 45 53 49 53 20 20 20 20</div>
<div class="t m" style="left:476px;top:457px;line-height:15px;color:#ffffff;letter-spacing:0.2px">SEGA GENESIS    </div>
<div class="t m" style="left:1.5px;top:472px;line-height:15px;color:#a4a4a4">2A:0110h:</div>
<div class="t m" style="left:84.7px;top:472px;line-height:15px;color:#d8d8d8">28 43 29 54 2D 35 30 20 31 39 39 31 2E 4A 55 4E</div>
<div class="t m" style="left:476px;top:472px;line-height:15px;color:#d8d8d8;letter-spacing:0.2px">(C)T-50 1991.JUN</div>
<div class="t m" style="left:1.5px;top:487px;line-height:15px;color:#a4a4a4">2A:0120h:</div>
<div class="t m" style="left:84.7px;top:487px;line-height:15px;color:#d8d8d8">42 4C 4F 43 4B 4F 55 54 20 20 20 20 20 20 20 20</div>
<div class="t m" style="left:476px;top:487px;line-height:15px;color:#d8d8d8;letter-spacing:0.2px">BLOCKOUT        </div>
<div class="t m" style="left:1.5px;top:502px;line-height:15px;color:#a4a4a4">2A:0130h:</div>
<div class="t m" style="left:84.7px;top:502px;line-height:15px;color:#d8d8d8">20 20 20 20 20 20 20 20 20 20 20 20 20 20 20 20</div>
<div class="t m" style="left:476px;top:502px;line-height:15px;color:#d8d8d8;letter-spacing:0.2px">                </div>
<div class="t m" style="left:1.5px;top:517px;line-height:15px;color:#a4a4a4">2A:0140h:</div>
<div class="t m" style="left:84.7px;top:517px;line-height:15px;color:#d8d8d8">20 20 20 20 20 20 20 20 20 20 20 20 20 20 20 20</div>
<div class="t m" style="left:476px;top:517px;line-height:15px;color:#d8d8d8;letter-spacing:0.2px">                </div>
<div class="t m" style="left:1.5px;top:532px;line-height:15px;color:#a4a4a4">2A:0150h:</div>
<div class="t m" style="left:84.7px;top:532px;line-height:15px;color:#d8d8d8">42 4C 4F 43 4B 4F 55 54 20 20 20 20 20 20 20 20</div>
<div class="t m" style="left:476px;top:532px;line-height:15px;color:#d8d8d8;letter-spacing:0.2px">BLOCKOUT        </div>
<div class="t m" style="left:1.5px;top:547px;line-height:15px;color:#a4a4a4">2A:0160h:</div>
<div class="t m" style="left:84.7px;top:547px;line-height:15px;color:#d8d8d8">20 20 20 20 20 20 20 20 20 20 20 20 20 20 20 20</div>
<div class="t m" style="left:476px;top:547px;line-height:15px;color:#d8d8d8;letter-spacing:0.2px">                </div>
<div class="t m" style="left:1.5px;top:562px;line-height:15px;color:#a4a4a4">2A:0170h:</div>
<div class="t m" style="left:84.7px;top:562px;line-height:15px;color:#d8d8d8">20 20 20 20 20 20 20 20 20 20 20 20 20 20 20 20</div>
<div class="t m" style="left:476px;top:562px;line-height:15px;color:#d8d8d8;letter-spacing:0.2px">                </div>
<div class="t m" style="left:1.5px;top:577px;line-height:15px;color:#a4a4a4">2A:0180h:</div>
<div class="t m" style="left:84.7px;top:577px;line-height:15px;color:#d8d8d8">47 4D 20 54 2D 35 30 31 30 36 20 2D 30 31 D8 9D</div>
<div class="t m" style="left:476px;top:577px;line-height:15px;color:#d8d8d8;letter-spacing:0.2px">GM T-50106 -01Ø.</div>
<div class="t m" style="left:1.5px;top:592px;line-height:15px;color:#a4a4a4">2A:0190h:</div>
<div class="t m" style="left:84.7px;top:592px;line-height:15px;color:#d8d8d8">4A 20 20 20 20 20 20 20 20 20 20 20 20 20 20 20</div>
<div class="t m" style="left:476px;top:592px;line-height:15px;color:#d8d8d8;letter-spacing:0.2px">J               </div>
<div class="t m" style="left:1.5px;top:607px;line-height:15px;color:#a4a4a4">2A:01A0h:</div>
<div class="t m" style="left:84.7px;top:607px;line-height:15px;color:#d8d8d8">00 00 00 00 00 01 FF FF 00 FF 00 00 00 FF FF FF</div>
<div class="t m" style="left:476px;top:607px;line-height:15px;color:#d8d8d8;letter-spacing:0.2px">......ÿÿ.ÿ...ÿÿÿ</div>
<div class="t m" style="left:1.5px;top:622px;line-height:15px;color:#a4a4a4">2A:01B0h:</div>
<div class="t m" style="left:84.7px;top:622px;line-height:15px;color:#d8d8d8">20 20 20 20 20 20 20 20 20 20 20 20 20 20 20 20</div>
<div class="t m" style="left:476px;top:622px;line-height:15px;color:#d8d8d8;letter-spacing:0.2px">                </div>
<div class="t m" style="left:1.5px;top:637px;line-height:15px;color:#a4a4a4">2A:01C0h:</div>
<div class="t m" style="left:84.7px;top:637px;line-height:15px;color:#d8d8d8">20 20 20 20 20 20 20 20 20 20 20 20 20 20 20 20</div>
<div class="t m" style="left:476px;top:637px;line-height:15px;color:#d8d8d8;letter-spacing:0.2px">                </div>
<div class="t m" style="left:1.5px;top:652px;line-height:15px;color:#a4a4a4">2A:01D0h:</div>
<div class="t m" style="left:84.7px;top:652px;line-height:15px;color:#d8d8d8">20 20 20 20 20 20 20 20 20 20 20 20 20 20 20 20</div>
<div class="t m" style="left:476px;top:652px;line-height:15px;color:#d8d8d8;letter-spacing:0.2px">                </div>
<div class="t m" style="left:1.5px;top:667px;line-height:15px;color:#a4a4a4">2A:01E0h:</div>
<div class="t m" style="left:84.7px;top:667px;line-height:15px;color:#d8d8d8">20 20 20 20 20 20 20 20 20 20 20 20 20 20 20 20</div>
<div class="t m" style="left:476px;top:667px;line-height:15px;color:#d8d8d8;letter-spacing:0.2px">                </div>
<div class="t m" style="left:1.5px;top:682px;line-height:15px;color:#a4a4a4">2A:01F0h:</div>
<div class="t m" style="left:84.7px;top:682px;line-height:15px;color:#d8d8d8">55 20 20 20 20 20 20 20 20 20 20 20 20 20 20 20</div>
<div class="t m" style="left:476px;top:682px;line-height:15px;color:#d8d8d8;letter-spacing:0.2px">U               </div>
<div class="t m" style="left:1.5px;top:697px;line-height:15px;color:#a4a4a4">2A:0200h:</div>
<div class="t m" style="left:84.7px;top:697px;line-height:15px;color:#d8d8d8">4A B9 00 A1 00 08 66 06 4A 79 00 A1 00 0C 66 7C</div>
<div class="t m" style="left:476px;top:697px;line-height:15px;color:#d8d8d8;letter-spacing:0.2px">J¹.¡..f.Jy.¡..f|</div>
<div class="t m" style="left:1.5px;top:712px;line-height:15px;color:#a4a4a4">2A:0210h:</div>
<div class="t m" style="left:84.7px;top:712px;line-height:15px;color:#d8d8d8">4B FA 00 7C 4C 9D 00 E0 4C DD 1F 00 10 29 EF 01</div>
<div class="t m" style="left:476px;top:712px;line-height:15px;color:#d8d8d8;letter-spacing:0.2px">Kú.|L..àLÝ...)ï.</div>
<div class="t m" style="left:1.5px;top:727px;line-height:15px;color:#a4a4a4">2A:0220h:</div>
<div class="t m" style="left:84.7px;top:727px;line-height:15px;color:#d8d8d8">02 00 00 0F 67 08 23 7C 53 45 47 41 2F 00 30 14</div>
<div class="t m" style="left:476px;top:727px;line-height:15px;color:#d8d8d8;letter-spacing:0.2px">....g.#|SEGA/.0.</div>
<div class="t m" style="left:1.5px;top:742px;line-height:15px;color:#a4a4a4">2A:0230h:</div>
<div class="t m" style="left:84.7px;top:742px;line-height:15px;color:#d8d8d8">70 00 2C 40 4E 66 72 17 1A 1D 38 85 DA 47 51 C9</div>
<div class="t m" style="left:476px;top:742px;line-height:15px;color:#d8d8d8;letter-spacing:0.2px">p.,@Nfr...8…ÚGQÉ</div>
<div class="t m" style="left:1.5px;top:757px;line-height:15px;color:#a4a4a4">2A:0240h:</div>
<div class="t m" style="left:84.7px;top:757px;line-height:15px;color:#d8d8d8">FF F8 28 9D 36 80 32 87 34 87 01 11 66 FC 74 25</div>
<div class="t m" style="left:476px;top:757px;line-height:15px;color:#d8d8d8;letter-spacing:0.2px">ÿø(.6€2‡4‡..füt%</div>
<div style="position:absolute;left:1644px;top:110px;width:16px;height:32px;background:#33312e;"></div>
<div style="position:absolute;left:1644px;top:764px;width:16px;height:9px;background:#33312e;"></div>
<div style="position:absolute;left:1645px;top:111px;width:14px;height:6px;border-radius:2.5px;background:linear-gradient(#f4f4f4,#c8c8c8);border:1px solid #a0a0a0"></div>
<div style="position:absolute;left:1644px;top:119px;width:16px;height:644px;border-radius:8px;background:linear-gradient(90deg,#ffffff,#f6f6f6 40%,#e6e6e6)"></div>
<div style="position:absolute;left:1647px;top:512px;width:10px;height:40px;border-radius:5px;background:linear-gradient(90deg,#dedede,#d0d0d0);border:1px solid #a8a8a8"></div>
<div style="position:absolute;left:1645px;top:765px;width:14px;height:7px;border-radius:2.5px;background:linear-gradient(#f4f4f4,#c8c8c8);border:1px solid #a0a0a0"></div>
<div style="position:absolute;left:1652px;top:755px;width:1px;height:1px;background:#444;"></div>
<div style="position:absolute;left:1664px;top:83px;width:256px;height:19px;background:#bcd2ee;"></div>
<span id="t17" class="t k" style="left:1668.91px;top:84.7px;line-height:16px;transform:scaleX(0.9827);">Workspace</span>
<svg style="left:1888px;top:88px" width="30" height="12"><path d="M2.6 2.4H10.2L6.4 6.6Z" fill="#000"/><rect x="18.8" y="0.8" width="9" height="9" rx="1.4" fill="none" stroke="#6e6e6e" stroke-width="1.1"/><path d="M21.2 3.2L25.4 7.4M25.4 3.2L21.2 7.4" stroke="#6e6e6e" stroke-width="1.7"/></svg>
<svg style="left:1664px;top:102px" width="40" height="90" viewBox="1664 102 40 90"><path d="M1667.5 117.5V106.5H1670.75L1671.5 108.0H1677.875V112.0H1672.625Z" fill="#f8e59e" stroke="#e8c255" stroke-linejoin="round"/><path d="M1667.5 117.5L1672.625 112.0H1681.5L1676.75 117.5Z" fill="#f8e59e" stroke="#e8c255" stroke-linejoin="round"/>
<path d="M1680.5 120.5H1687L1690.5 124V133.5H1680.5Z" fill="#fbfcff" stroke="#b5c5ea"/><path d="M1687 120.5V124H1690.5" fill="#e3eafa" stroke="#b5c5ea" stroke-linejoin="round"/>
<path d="M1667.5 151.5V140.5H1670.75L1671.5 142.0H1677.875V146.0H1672.625Z" fill="#f8e59e" stroke="#e8c255" stroke-linejoin="round"/><path d="M1667.5 151.5L1672.625 146.0H1681.5L1676.75 151.5Z" fill="#f8e59e" stroke="#e8c255" stroke-linejoin="round"/><path d="M1678 135.8L1679.4 139.4L1683.2 139.6L1680.2 142L1681.2 145.6L1678 143.6L1674.8 145.6L1675.8 142L1672.8 139.6L1676.6 139.4Z" fill="#6cabee"/>
<circle cx="1677.8" cy="158.4" r="4.7" fill="#eef2fb" stroke="#b4c6e6" stroke-width="1"/><path d="M1677.8 155.4V158.6L1680 157" stroke="#6f8fc0" stroke-width=".9" fill="none"/><path opacity="1" d="M1667.5 168.5V157.5H1670.75L1671.5 159.0H1677.875V163.0H1672.625Z" fill="#f8e59e" stroke="#e8c255" stroke-linejoin="round"/><path d="M1667.5 168.5L1672.625 163.0H1681.5L1676.75 168.5Z" fill="#f8e59e" stroke="#e8c255" stroke-linejoin="round"/>
<path d="M1675.5 170.5H1682.5V185L1679 182L1675.5 185Z" fill="#f8e59e" stroke="#e8c255"/><path d="M1667.5 185.5V174.5H1670.75L1671.5 176.0H1677.875V180.0H1672.625Z" fill="#f8e59e" stroke="#e8c255" stroke-linejoin="round"/><path d="M1667.5 185.5L1672.625 180.0H1681.5L1676.75 185.5Z" fill="#f8e59e" stroke="#e8c255" stroke-linejoin="round"/></svg>
<span id="t18" class="t " style="left:1689.71px;top:102.8px;line-height:16px;transform:scaleX(0.9600);">Open Files</span>
<span id="t19" class="t " style="left:1699.68px;top:119.8px;line-height:16px;transform:scaleX(1.0206);">flash.bin</span>
<span id="t20" class="t dim" style="left:1818.74px;top:119.8px;line-height:16px;transform:scaleX(1.0232);">/home/...k-cab/</span>
<span id="t21" class="t " style="left:1688.71px;top:136.8px;line-height:16px;transform:scaleX(0.9776);">Favorite Files</span>
<span id="t22" class="t " style="left:1688.66px;top:153.8px;line-height:16px;transform:scaleX(0.9579);">Recent Files</span>
<span id="t23" class="t " style="left:1689.20px;top:170.8px;line-height:16px;transform:scaleX(1.0037);">Bookmarked Files</span>
<div style="position:absolute;left:1664px;top:423px;width:256px;height:2px;background:#a4a4a4;"></div>
<div style="position:absolute;left:1664px;top:423px;width:103px;height:26px;background:#838383;"></div>
<div style="position:absolute;left:1664px;top:423px;width:103px;height:1px;background:#8c8c8c;"></div>
<span id="t24" class="t k" style="left:1695.35px;top:428.5px;line-height:16px;transform:scaleX(0.9870);">Workspace</span>
<span id="t25" class="t " style="left:1797.67px;top:430.4px;line-height:16px;transform:scaleX(1.0072);">Explorer</span>
<div style="position:absolute;left:1664px;top:453px;width:256px;height:19px;background:#bcd2ee;"></div>
<span id="t26" class="t k" style="left:1668.15px;top:454.7px;line-height:16px;transform:scaleX(1.0320);">Inspector</span>
<svg style="left:1888px;top:458px" width="30" height="12"><path d="M2.6 2.4H10.2L6.4 6.6Z" fill="#000"/><rect x="18.8" y="0.8" width="9" height="9" rx="1.4" fill="none" stroke="#6e6e6e" stroke-width="1.1"/><path d="M21.2 3.2L25.4 7.4M25.4 3.2L21.2 7.4" stroke="#6e6e6e" stroke-width="1.7"/></svg>
<div style="position:absolute;left:1664px;top:472px;width:241px;height:25px;background:linear-gradient(#e8e8e8,#fdfdfd 35%,#ffffff)"></div>
<div style="position:absolute;left:1763px;top:472px;width:1px;height:25px;background:#d8d8d8;"></div>
<span id="t27" class="t b" style="left:1700.98px;top:476.7px;line-height:16px;transform:scaleX(0.9524);color:#333">Type</span>
<span id="t28" class="t b" style="left:1818.95px;top:476.7px;line-height:16px;transform:scaleX(0.9813);color:#333">Value</span>
<div style="position:absolute;left:1664px;top:497px;width:241px;height:251px;background:#2e2d2a;"></div>
<div style="position:absolute;left:1664px;top:497px;width:99px;height:18px;background:#575757;"></div>
<div style="position:absolute;left:1764px;top:497px;width:141px;height:18px;background:#575757;"></div>
<span id="t29" class="t " style="left:1666.48px;top:499.3px;line-height:16px;transform:scaleX(0.9867);color:#e6e6e6">Signed Byte</span>
<span id="t30" class="t " style="left:1766.76px;top:499.3px;line-height:16px;transform:scaleX(0.8809);color:#e6e6e6">83</span>
<div style="position:absolute;left:1664px;top:516px;width:99px;height:18px;background:#413e3a;"></div>
<div style="position:absolute;left:1764px;top:516px;width:141px;height:18px;background:#413e3a;"></div>
<span id="t31" class="t " style="left:1665.96px;top:518.3px;line-height:16px;transform:scaleX(1.0137);color:#e6e6e6">Unsigned Byte</span>
<span id="t32" class="t " style="left:1766.90px;top:518.3px;line-height:16px;transform:scaleX(0.8809);color:#e6e6e6">83</span>
<div style="position:absolute;left:1664px;top:535px;width:99px;height:18px;background:#3b3a36;"></div>
<div style="position:absolute;left:1764px;top:535px;width:141px;height:18px;background:#3b3a36;"></div>
<span id="t33" class="t " style="left:1665.97px;top:537.3px;line-height:16px;transform:scaleX(0.9953);color:#e6e6e6">Signed Short</span>
<span id="t34" class="t " style="left:1766.40px;top:537.3px;line-height:16px;transform:scaleX(0.9701);color:#e6e6e6">17747</span>
<div style="position:absolute;left:1664px;top:554px;width:99px;height:18px;background:#413e3a;"></div>
<div style="position:absolute;left:1764px;top:554px;width:141px;height:18px;background:#413e3a;"></div>
<span id="t35" class="t " style="left:1665.70px;top:556.3px;line-height:16px;transform:scaleX(1.0153);color:#e6e6e6">Unsigned Short</span>
<span id="t36" class="t " style="left:1765.91px;top:556.3px;line-height:16px;transform:scaleX(0.9701);color:#e6e6e6">17747</span>
<div style="position:absolute;left:1664px;top:573px;width:99px;height:18px;background:#3b3a36;"></div>
<div style="position:absolute;left:1764px;top:573px;width:141px;height:18px;background:#3b3a36;"></div>
<span id="t37" class="t " style="left:1666.20px;top:575.3px;line-height:16px;transform:scaleX(1.0111);color:#e6e6e6">Signed Int</span>
<span id="t38" class="t " style="left:1766.43px;top:575.3px;line-height:16px;transform:scaleX(0.9834);color:#e6e6e6">1095189843</span>
<div style="position:absolute;left:1664px;top:592px;width:99px;height:18px;background:#413e3a;"></div>
<div style="position:absolute;left:1764px;top:592px;width:141px;height:18px;background:#413e3a;"></div>
<span id="t39" class="t " style="left:1665.82px;top:594.3px;line-height:16px;transform:scaleX(1.0349);color:#e6e6e6">Unsigned Int</span>
<span id="t40" class="t " style="left:1766.41px;top:594.3px;line-height:16px;transform:scaleX(0.9840);color:#e6e6e6">1095189843</span>
<div style="position:absolute;left:1664px;top:611px;width:99px;height:18px;background:#3b3a36;"></div>
<div style="position:absolute;left:1764px;top:611px;width:141px;height:18px;background:#3b3a36;"></div>
<span id="t41" class="t " style="left:1665.86px;top:613.3px;line-height:16px;transform:scaleX(1.0149);color:#e6e6e6">Signed Int64</span>
<span id="t42" class="t " style="left:1766.52px;top:613.3px;line-height:16px;color:#e6e6e6">5639992312211129683</span>
<div style="position:absolute;left:1664px;top:630px;width:99px;height:18px;background:#413e3a;"></div>
<div style="position:absolute;left:1764px;top:630px;width:141px;height:18px;background:#413e3a;"></div>
<span id="t43" class="t " style="left:1665.65px;top:632.3px;line-height:16px;transform:scaleX(1.0280);color:#e6e6e6">Unsigned Int64</span>
<span id="t44" class="t " style="left:1766.11px;top:632.3px;line-height:16px;transform:scaleX(1.0023);color:#e6e6e6">5639992312211129683</span>
<div style="position:absolute;left:1664px;top:649px;width:99px;height:18px;background:#3b3a36;"></div>
<div style="position:absolute;left:1764px;top:649px;width:141px;height:18px;background:#3b3a36;"></div>
<span id="t45" class="t " style="left:1666.20px;top:651.3px;line-height:16px;transform:scaleX(0.9870);color:#e6e6e6">Float</span>
<span id="t46" class="t " style="left:1766.14px;top:651.3px;line-height:16px;transform:scaleX(0.9859);color:#e6e6e6">12.45442</span>
<div style="position:absolute;left:1664px;top:668px;width:99px;height:18px;background:#413e3a;"></div>
<div style="position:absolute;left:1764px;top:668px;width:141px;height:18px;background:#413e3a;"></div>
<span id="t47" class="t " style="left:1666.01px;top:670.3px;line-height:16px;transform:scaleX(1.0238);color:#e6e6e6">Double</span>
<span id="t48" class="t " style="left:1766.34px;top:670.3px;line-height:16px;transform:scaleX(0.9887);color:#e6e6e6">1.14729864330687e+69</span>
<div style="position:absolute;left:1664px;top:687px;width:99px;height:18px;background:#3b3a36;"></div>
<div style="position:absolute;left:1764px;top:687px;width:141px;height:18px;background:#3b3a36;"></div>
<span id="t49" class="t " style="left:1665.98px;top:689.3px;line-height:16px;transform:scaleX(0.9942);color:#e6e6e6">Half Float</span>
<span id="t50" class="t " style="left:1766.71px;top:689.3px;line-height:16px;transform:scaleX(0.9710);color:#e6e6e6">5.324219</span>
<div style="position:absolute;left:1664px;top:706px;width:99px;height:18px;background:#413e3a;"></div>
<div style="position:absolute;left:1764px;top:706px;width:141px;height:18px;background:#413e3a;"></div>
<span id="t51" class="t " style="left:1665.95px;top:708.3px;line-height:16px;transform:scaleX(1.0351);color:#e6e6e6">String</span>
<span id="t52" class="t " style="left:1765.67px;top:708.3px;line-height:16px;transform:scaleX(0.8813);color:#e6e6e6">SEGA GENESIS    (C)T-...</span>
<div style="position:absolute;left:1664px;top:725px;width:99px;height:18px;background:#3b3a36;"></div>
<div style="position:absolute;left:1764px;top:725px;width:141px;height:18px;background:#3b3a36;"></div>
<span id="t53" class="t " style="left:1665.88px;top:727.3px;line-height:16px;transform:scaleX(0.8955);color:#e6e6e6">DOSDATE</span>
<span id="t54" class="t " style="left:1765.89px;top:727.3px;line-height:16px;transform:scaleX(1.0169);color:#e6e6e6">10/19/2014</span>
<div style="position:absolute;left:1664px;top:744px;width:99px;height:4px;background:#403e3a;"></div>
<div style="position:absolute;left:1764px;top:744px;width:141px;height:4px;background:#403e3a;"></div>
<div style="position:absolute;left:1905px;top:472px;width:15px;height:276px;background:#3c3b37"></div>
<div style="position:absolute;left:1905px;top:472px;width:15px;height:275px;border-radius:7.5px;background:linear-gradient(90deg,#ffffff,#f4f4f4 40%,#e4e4e4)"></div>
<div style="position:absolute;left:1908px;top:484px;width:9px;height:181px;border-radius:4.5px;background:linear-gradient(90deg,#dedede,#d0d0d0);border:1px solid #a8a8a8"></div>
<div style="position:absolute;left:1912px;top:739px;width:1px;height:1px;background:#444;"></div>
<div style="position:absolute;left:1664px;top:747px;width:256px;height:2px;background:#a4a4a4;"></div>
<div style="position:absolute;left:1664px;top:747px;width:95px;height:26px;background:#838383;"></div>
<div style="position:absolute;left:1664px;top:747px;width:95px;height:1px;background:#8c8c8c;"></div>
<span id="t55" class="t k" style="left:1694.22px;top:752.7px;line-height:16px;transform:scaleX(1.0497);">Inspector</span>
<span id="t56" class="t " style="left:1790.73px;top:754.4px;line-height:16px;transform:scaleX(0.9847);">Variables</span>
<span id="t57" class="t " style="left:1882.20px;top:753.4px;line-height:16px;">B</span>
<div style="position:absolute;left:1889px;top:749px;width:31px;height:24px;background:#d0d0d0;"></div>
<svg style="left:1889px;top:748px" width="31" height="25"><g fill="none" stroke-width="1.3"><path d="M13 8L8.5 12.5L13 17" stroke="#b0b0b0"/><path d="M21 8L25.5 12.5L21 17" stroke="#3a3a3a"/></g></svg>
<svg style="left:1664px;top:424px" width="140" height="26" viewBox="1664 424 140 26"><path d="M1677.5 428.9H1682L1684.5 431.4V437.9H1677.5Z" fill="#fbfcff" stroke="#a3b7e6"/><path d="M1682 428.9V431.4H1684.5" fill="#e3eafa" stroke="#a3b7e6" stroke-linejoin="round"/><path d="M1675.1 430.9H1679.6L1682.1 433.4V440.9H1675.1Z" fill="#fbfcff" stroke="#a3b7e6"/><path d="M1679.6 430.9V433.4H1682.1" fill="#e3eafa" stroke="#a3b7e6" stroke-linejoin="round"/><path d="M1672.5 432.9H1677L1679.5 435.4V442.9H1672.5Z" fill="#fbfcff" stroke="#a3b7e6"/><path d="M1677 432.9V435.4H1679.5" fill="#e3eafa" stroke="#a3b7e6" stroke-linejoin="round"/><path d="M1774.5 441.5V430.5H1777.75L1778.5 432.0H1784.875V436.0H1779.625Z" fill="#f8e59e" stroke="#e8c255" stroke-linejoin="round"/><path d="M1774.5 441.5L1779.625 436.0H1788.5L1783.75 441.5Z" fill="#f8e59e" stroke="#e8c255" stroke-linejoin="round"/></svg>
<svg style="left:1664px;top:748px" width="225" height="26" viewBox="1664 748 225 26"><path d="M1681 751.8L1671.8 760.2L1677.6 759.6L1675 766.2L1684.2 757.4L1678.4 758Z" fill="#f9e08a" stroke="#e3b94a" stroke-width=".5"/><rect x="1767.5" y="753.5" width="3.6" height="3.6" fill="#f7d877" stroke="#caa23c" stroke-width=".6"/><rect x="1774" y="757.4" width="4.6" height="4" fill="#f7d877"/><rect x="1774" y="763.4" width="4.6" height="4" fill="#f7d877"/><path d="M1769.5 757.5V765.5H1773.5M1769.5 759.5H1773.5" fill="none" stroke="#6c9ad8" stroke-width=".8" stroke-dasharray="1 1"/><path d="M1862.5 752.5H1870.5V766L1866.5 762L1862.5 766Z" fill="#f7d877" stroke="#e3b94a" stroke-width=".6"/></svg>
<div style="position:absolute;left:0px;top:777px;width:1920px;height:19px;background:#bcd2ee;"></div>
<span id="t58" class="t k" style="left:4.27px;top:778.6px;line-height:16px;transform:scaleX(0.9715);">Find Results</span>
<svg style="left:1888px;top:782px" width="30" height="12"><path d="M2.6 2.4H10.2L6.4 6.6Z" fill="#000"/><rect x="18.8" y="0.8" width="9" height="9" rx="1.4" fill="none" stroke="#6e6e6e" stroke-width="1.1"/><path d="M21.2 3.2L25.4 7.4M25.4 3.2L21.2 7.4" stroke="#6e6e6e" stroke-width="1.7"/></svg>
<div style="position:absolute;left:4px;top:800px;width:27px;height:182px;background:#6d6d6d;border:1px solid #bdbdbd"></div>
<div style="position:absolute;left:5px;top:812px;width:25px;height:1px;background:#ff8c1a;"></div>
<div style="position:absolute;left:5px;top:930px;width:25px;height:1px;background:#ff8c1a;"></div>
<div style="position:absolute;left:5px;top:919px;width:25px;height:1px;background:#fff200;"></div>
<span id="t59" class="t " style="left:0.73px;top:990.7px;line-height:16px;transform:scaleX(0.8249);">3</span>
<div style="position:absolute;left:32px;top:796px;width:1px;height:211px;background:#353430;"></div>
<svg style="left:33px;top:796px" width="6" height="211"><defs><pattern id="dots" width="6" height="3" patternUnits="userSpaceOnUse"><rect width="6" height="3" fill="#cbcbcb"/><rect x="1" y="1" width="1" height="1" fill="#fff"/><rect x="2" y="2" width="1" height="1" fill="#fff"/><rect x="4" y="2" width="1" height="1" fill="#fff"/></pattern></defs><rect width="6" height="211" fill="url(#dots)"/></svg>
<svg style="left:2px;top:916px" width="32" height="7"><path d="M0 0.5L3 3.5L0 6.5Z" fill="#8e8e8e"/><path d="M31.5 0.5L28.8 3.5L31.5 6.5Z" fill="#8e8e8e"/></svg>
<div style="position:absolute;left:39px;top:796px;width:700px;height:25px;background:linear-gradient(#e8e8e8,#fdfdfd 35%,#ffffff)"></div>
<div style="position:absolute;left:138px;top:796px;width:1px;height:25px;background:#d8d8d8;"></div>
<span id="t60" class="t b" style="left:66.24px;top:800.7px;line-height:16px;transform:scaleX(0.9328);color:#333">Address</span>
<span id="t61" class="t b" style="left:422.69px;top:800.7px;line-height:16px;transform:scaleX(0.9937);color:#333">Value</span>
<div style="position:absolute;left:39px;top:821px;width:700px;height:19px;background:#797979;"></div>
<div style="position:absolute;left:39px;top:821px;width:700px;height:1px;background:#a2a2a2;"></div>
<div style="position:absolute;left:39px;top:839px;width:700px;height:1px;background:#8a8a8a;"></div>
<span id="t62" class="t " style="left:41.26px;top:822.8px;line-height:16px;transform:scaleX(0.9546);color:#f4f4f4">Found 3 occurrences of 'SEGA GENESIS    '.</span>
<div style="position:absolute;left:39px;top:840px;width:700px;height:57px;background:#2c2b28;"></div>
<div style="position:absolute;left:39px;top:840px;width:99px;height:18px;background:#413e3a;"></div>
<div style="position:absolute;left:139px;top:840px;width:599px;height:18px;background:#413e3a;"></div>
<span id="t63" class="t " style="left:43.18px;top:842.3px;line-height:16px;transform:scaleX(0.9843);color:#d6d6d6">40100h</span>
<span id="t64" class="t " style="left:141.23px;top:842.3px;line-height:16px;transform:scaleX(0.8761);color:#d6d6d6">SEGA GENESIS</span>
<div style="position:absolute;left:39px;top:859px;width:99px;height:18px;background:#595959;"></div>
<div style="position:absolute;left:139px;top:859px;width:599px;height:18px;background:#595959;"></div>
<span id="t65" class="t " style="left:41.97px;top:861.3px;line-height:16px;transform:scaleX(0.9816);color:#f2f2f2">2A0100h</span>
<span id="t66" class="t " style="left:141.03px;top:861.3px;line-height:16px;transform:scaleX(0.8756);color:#f2f2f2">SEGA GENESIS</span>
<div style="position:absolute;left:39px;top:878px;width:99px;height:18px;background:#413e3a;"></div>
<div style="position:absolute;left:139px;top:878px;width:599px;height:18px;background:#413e3a;"></div>
<span id="t67" class="t " style="left:41.59px;top:880.3px;line-height:16px;transform:scaleX(0.9682);color:#d6d6d6">2E0100h</span>
<span id="t68" class="t " style="left:140.98px;top:880.3px;line-height:16px;transform:scaleX(0.8756);color:#d6d6d6">SEGA GENESIS</span>
<div style="position:absolute;left:0px;top:1007px;width:1920px;height:2px;background:#a2a2a2;"></div>
<div style="position:absolute;left:83px;top:1007px;width:109px;height:26px;background:#838383;"></div>
<div style="position:absolute;left:83px;top:1007px;width:109px;height:1px;background:#8c8c8c;"></div>
<span id="t69" class="t " style="left:31.88px;top:1013.5px;line-height:16px;transform:scaleX(1.0538);">Output</span>
<span id="t70" class="t k" style="left:113.58px;top:1012.6px;line-height:16px;transform:scaleX(0.9746);">Find Results</span>
<span id="t71" class="t " style="left:221.67px;top:1013.5px;line-height:16px;transform:scaleX(0.9824);">Find in Files</span>
<span id="t72" class="t " style="left:329.80px;top:1013.5px;line-height:16px;transform:scaleX(1.0008);">Compare</span>
<span id="t73" class="t " style="left:422.94px;top:1013.5px;line-height:16px;transform:scaleX(1.0443);">Histogram</span>
<span id="t74" class="t " style="left:523.80px;top:1013.5px;line-height:16px;transform:scaleX(0.9878);">Checksum</span>
<span id="t75" class="t " style="left:623.95px;top:1013.5px;line-height:16px;transform:scaleX(0.9479);">Process</span>
<svg style="left:0px;top:1009px" width="640" height="24" viewBox="0 1009 640 24"><path d="M8 1017H18.6M10 1019.8H20.2M8 1022.6H16.8M10 1025.4H19.6" stroke="#6cabee" stroke-width="1.15"/>
<path d="M89 1024.5H93M89 1026.5H93M89 1028.5H93" stroke="#6cabee" stroke-width="1"/><path d="M98.4 1020.2L103.4 1026" stroke="#f8e08e" stroke-width="2.2" stroke-linecap="round"/><path d="M98.4 1020.2L103.4 1026" stroke="#e9c45c" stroke-width=".5" transform="translate(.9,.9)"/><circle cx="95.6" cy="1017" r="4.3" fill="#fdfdff" stroke="#c3d0ee" stroke-width="1.2"/>
<path d="M198 1024.5H202M198 1026.5H202M198 1028.5H202" stroke="#6cabee" stroke-width="1"/><path d="M206 1012L208.2 1016.2L213.5 1015.5L210.5 1019.5L213 1025L207 1022.5L204 1019Z" fill="#f8e59e" stroke="#e8c255" stroke-width=".6"/><path d="M206.5 1020.7L211.6 1026" stroke="#f8e08e" stroke-width="2" stroke-linecap="round"/><path d="M206.5 1020.7L211.6 1026" stroke="#e9c45c" stroke-width=".5" transform="translate(.9,.9)"/><circle cx="204" cy="1018" r="3.7" fill="#fdfdff" stroke="#c3d0ee" stroke-width="1.2"/>
<path d="M306 1023.5H310M306 1025.5H310M306 1027.5H310" stroke="#6cabee" stroke-width="1"/><text x="309.6" y="1027.4" font-family="Liberation Sans" font-weight="bold" font-size="18.5" fill="#f8df88" stroke="#d9ae43" stroke-width=".5">?</text>
<g transform="translate(0,2.3)"><path d="M398 1022.5H402M398 1024.5H402M398 1026.5H402" stroke="#6cabee" stroke-width="1"/><path d="M403.0 1024.5V1022.5" stroke="#6cabee" stroke-width="1"/><path d="M404.1 1024.5V1020.5" stroke="#6cabee" stroke-width="1"/><path d="M405.2 1024.5V1017.5" stroke="#6cabee" stroke-width="1"/><path d="M406.3 1024.5V1014.5" stroke="#6cabee" stroke-width="1"/><path d="M407.4 1024.5V1018.5" stroke="#6cabee" stroke-width="1"/><path d="M408.5 1024.5V1020.5" stroke="#6cabee" stroke-width="1"/><path d="M409.6 1024.5V1021.5" stroke="#6cabee" stroke-width="1"/><path d="M410.7 1024.5V1019.5" stroke="#6cabee" stroke-width="1"/><path d="M411.8 1024.5V1020.5" stroke="#6cabee" stroke-width="1"/><path d="M412.9 1024.5V1022.5" stroke="#6cabee" stroke-width="1"/><path d="M401.5 1011V1025H415" fill="none" stroke="#f7d877" stroke-width="1.6"/></g>
<g transform="translate(0,2.3)"><path d="M499 1022.5H503M499 1024.5H503M499 1026.5H503" stroke="#6cabee" stroke-width="1"/><path d="M513.6 1015.6V1014H506.4L510.2 1019L506.4 1024H513.6V1022.4" fill="none" stroke="#6cabee" stroke-width="2.9"/></g>
<g transform="translate(0,2.6)"><path d="M599 1021.5H603M599 1023.5H603M599 1025.5H603" stroke="#6cabee" stroke-width="1"/><path d="M604 1013.4H616L612.5 1018H600.5Z" fill="#6cabee"/><path d="M603 1018.6V1022M606 1018.6V1021.5M609 1018.6V1021M612 1018.4V1020.5" stroke="#6cabee" stroke-width="1.2"/></g></svg>
<span id="t76" class="t " style="left:4.19px;top:1036.7px;line-height:16px;transform:scaleX(0.9921);">Selected: 16 [10h] bytes (Range: 2752768 [2A0100h] to 2752783 [2A010Fh])</span>
<span id="t77" class="t " style="left:1406.92px;top:1036.7px;line-height:16px;transform:scaleX(1.0019);">Start: 2752768 [2A0100h]</span>
<span id="t78" class="t " style="left:1558.18px;top:1036.7px;line-height:16px;transform:scaleX(0.9911);">Sel: 16 [10h]</span>
<span id="t79" class="t " style="left:1692.85px;top:1036.7px;line-height:16px;transform:scaleX(0.9554);">Size: 4194304</span>
<span id="t80" class="t " style="left:1779.15px;top:1036.7px;line-height:16px;transform:scaleX(0.9131);">ANSI</span>
<span id="t81" class="t " style="left:1841.83px;top:1036.7px;line-height:16px;transform:scaleX(0.8848);">LIT</span>
<span id="t82" class="t " style="left:1872.99px;top:1036.7px;line-height:16px;transform:scaleX(0.7942);">W</span>
<span id="t83" class="t " style="left:1893.35px;top:1036.7px;line-height:16px;transform:scaleX(0.8187);">OVR</span>
<svg style="left:954px;top:216px" width="12" height="20" viewBox="954 216 12 20"><g fill="none" stroke-linecap="round" stroke-linejoin="round"><path d="M957.5 219.5H961.5M959.5 219.5V232.5M957.5 232.5H961.5" stroke="#000" stroke-width="3.2"/><path d="M957.3 219.5H961.7M959.5 219.5V232.5M957.3 232.5H961.7" stroke="#f4f4f4" stroke-width="1.1" stroke-linecap="butt"/></g></svg>
</div></body></html>
